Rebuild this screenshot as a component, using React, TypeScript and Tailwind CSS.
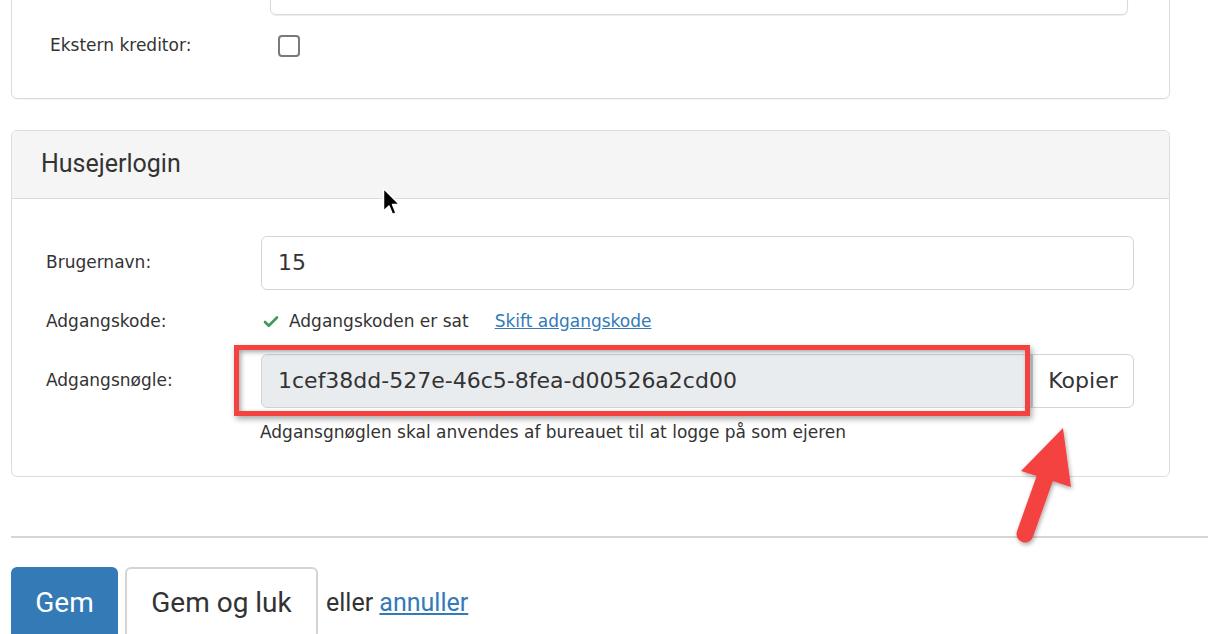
import React from "react";
import { Check } from "lucide-react";

const label = "text-[17px] text-[#333] font-['DejaVu_Sans',sans-serif]";

export default function App() {
  return (
    <div className="relative h-[634px] w-[1208px] overflow-hidden bg-white">
      {/* panel cut off at the top */}
      <div className="-mt-[40px] ml-[11px] w-[1159px] rounded-md border border-[#dcdcdc] shadow-[0_1px_1px_rgba(0,0,0,0.04)]">
        <div className="flex pt-[10px] pl-[258px] pr-[41px]">
          <div className="h-[44px] w-full rounded-md border border-[#d6dbe0] shadow-[0_1px_1px_rgba(0,0,0,0.08)]" />
        </div>
        <div className="mt-[18px] mb-[39px] flex items-center pl-[38px]">
          <div className={`w-[228px] ${label}`}>Ekstern kreditor:</div>
          <div className="h-[22px] w-[22px] rounded-[4px] border-2 border-[#7a7a7a] bg-white" />
        </div>
      </div>

      {/* Husejerlogin */}
      <div className="mt-[31px] ml-[11px] w-[1159px] rounded-md border border-[#dcdcdc]">
        <div className="flex h-[68px] items-center rounded-t-md border-b border-[#dcdcdc] bg-[#f5f5f5] pl-[29px]">
          <span className="font-['Roboto',sans-serif] text-[25px] text-[#333]">Husejerlogin</span>
        </div>
        <div className="pt-[37px] pr-[35px] pb-[33px] pl-[34px]">
          <div className="flex h-[54px] items-center">
            <div className={`w-[215px] ${label}`}>Brugernavn:</div>
            <div className="flex h-[54px] flex-1 items-center rounded-md border border-[#d0d5da] px-4">
              <span className="font-['DejaVu_Sans',sans-serif] text-[22px] text-[#333]">15</span>
            </div>
          </div>

          <div className="mt-[14px] flex h-[36px] items-center">
            <div className={`w-[215px] ${label}`}>Adgangskode:</div>
            <Check size={18} strokeWidth={3.5} className="ml-[1px] text-[#3d9a5b]" />
            <span className={`ml-[9px] ${label}`}>Adgangskoden er sat</span>
            <a className="ml-[26px] font-['DejaVu_Sans',sans-serif] text-[17px] text-[#337ab7] underline">
              Skift adgangskode
            </a>
          </div>

          <div className="mt-[14px] flex h-[54px] items-center">
            <div className={`w-[215px] ${label}`}>Adgangsnøgle:</div>
            <div className="relative flex h-[54px] flex-1">
              <div className="flex flex-1 items-center rounded-l-md border border-[#d0d5da] bg-[#e9ecef] px-4">
                <span className="font-['DejaVu_Sans',sans-serif] text-[22px] text-[#333]">
                  1cef38dd-527e-46c5-8fea-d00526a2cd00
                </span>
              </div>
              <div className="flex w-[102px] items-center justify-center rounded-r-md border border-[#d0d5da] bg-white">
                <span className="font-['DejaVu_Sans',sans-serif] text-[22px] text-[#333]">Kopier</span>
              </div>
              {/* red highlight annotation */}
              <div className="pointer-events-none absolute -top-[9px] -left-[27px] h-[71px] w-[796px] border-[5px] border-[#f4433f] shadow-[2px_3px_6px_rgba(0,0,0,0.35),inset_2px_2px_5px_rgba(0,0,0,0.35)]" />
            </div>
          </div>

          <div className="mt-[13px] pl-[214px] leading-[22px]">
            <span className={label}>Adgansgnøglen skal anvendes af bureauet til at logge på som ejeren</span>
          </div>
        </div>
      </div>

      <div className="mt-[59px] ml-[11px] border-t-2 border-[#d6d6d6]" />

      <div className="mt-[29px] ml-[11px] flex items-center gap-[7px]">
        <div className="flex h-[72px] w-[107px] items-center justify-center rounded-md bg-[#337ab7]">
          <span className="font-['Roboto',sans-serif] text-[28px] text-white">Gem</span>
        </div>
        <div className="flex h-[72px] w-[193px] items-center justify-center rounded-md border-2 border-[#d4d4d4] bg-white">
          <span className="font-['Roboto',sans-serif] text-[28px] text-[#333]">Gem og luk</span>
        </div>
        <span className="ml-[1px] font-['Roboto',sans-serif] text-[25px] text-[#333]">
          eller <a className="text-[#337ab7] underline">annuller</a>
        </span>
      </div>

      {/* mouse cursor */}
      <svg className="absolute top-[187px] left-[382px]" width="20" height="32" viewBox="0 0 20 32">
        <path
          d="M1.5 1.5 L1.5 24 L7 19 L10.5 27.5 L14 26 L10.5 17.5 L17.5 17.5 Z"
          fill="#000"
          stroke="#fff"
          strokeWidth="1.5"
          strokeLinejoin="round"
        />
      </svg>

      {/* red annotation arrow */}
      <svg className="absolute top-[420px] left-[1010px]" width="80" height="130" viewBox="0 0 80 130">
        <defs>
          <filter id="sh" x="-30%" y="-30%" width="160%" height="160%">
            <feDropShadow dx="1" dy="2" stdDeviation="2" floodColor="#000" floodOpacity="0.35" />
          </filter>
        </defs>
        <g filter="url(#sh)">
          <line x1="36" y1="55" x2="15" y2="114" stroke="#f4433f" strokeWidth="17" strokeLinecap="round" />
          <polygon points="53,8 11,51 61,67" fill="#f4433f" />
        </g>
      </svg>
    </div>
  );
}
